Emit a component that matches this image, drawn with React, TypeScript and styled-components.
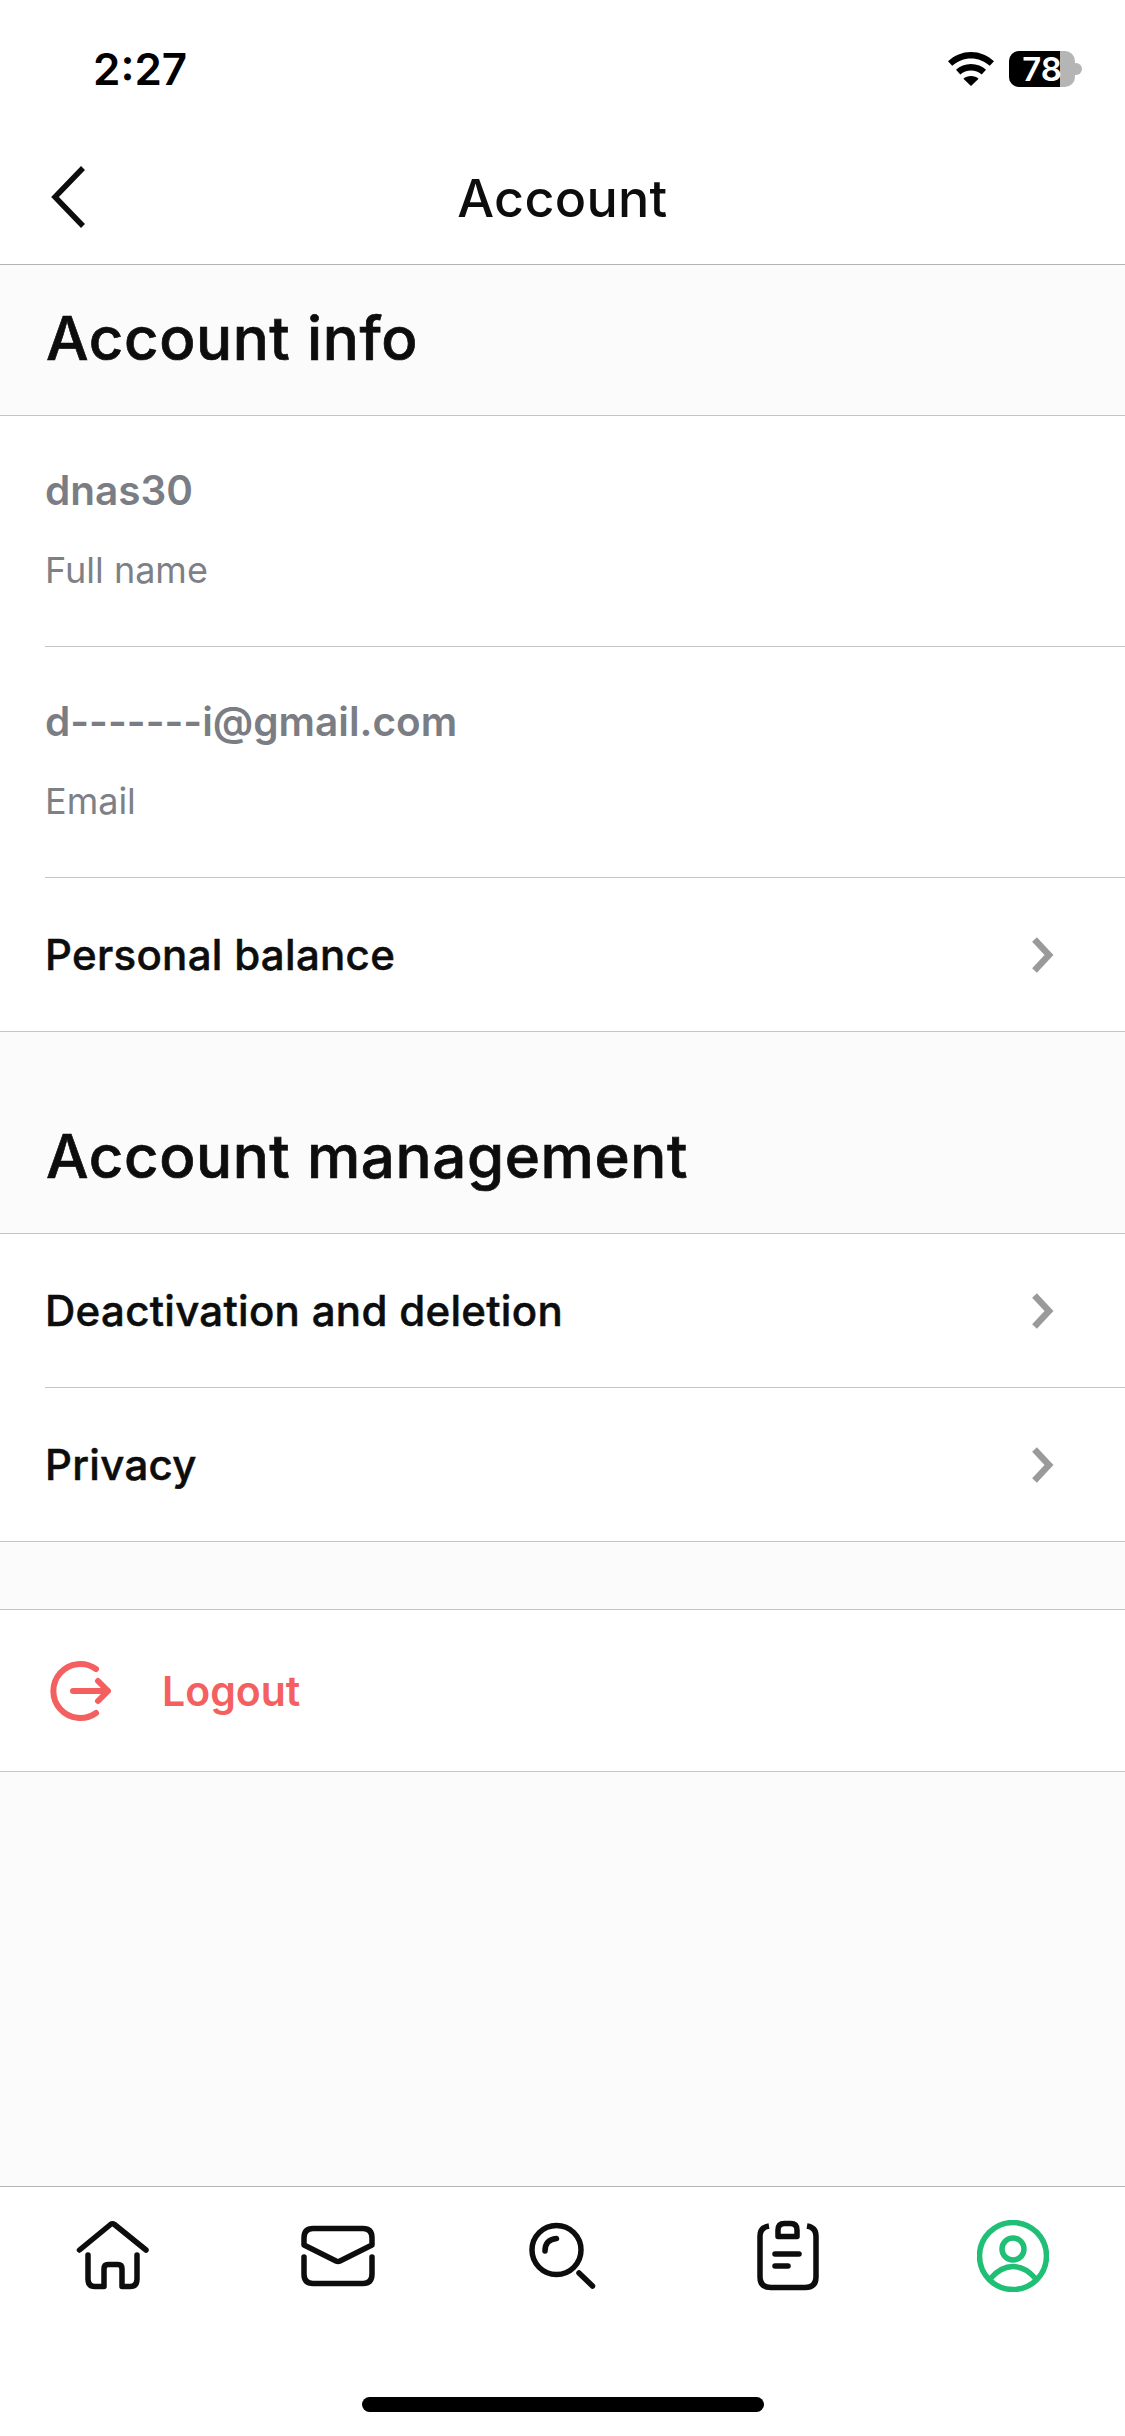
import React from "react";
import styled, { createGlobalStyle } from "styled-components";

const GlobalStyle = createGlobalStyle`
  * { box-sizing: border-box; }
  html, body { margin: 0; padding: 0; background: #fff; }
  body { font-family: "Inter", "Liberation Sans", sans-serif; color: #0d0d0d; }
`;

const Screen = styled.div`
  width: 1125px;
  height: 2436px;
  display: flex;
  flex-direction: column;
  background: #fbfbfb;
`;

const StatusBar = styled.div`
  height: 132px;
  background: #fff;
  display: flex;
  justify-content: space-between;
  align-items: flex-start;
  padding: 51px 43px 0 93px;
`;

const Clock = styled.span`
  font-size: 44px;
  line-height: 36px;
  font-weight: 600;
  color: #000;
`;

const StatusIcons = styled.div`
  display: flex;
  align-items: center;
  gap: 15px;
`;

const Battery = styled.div`
  position: relative;
  width: 66px;
  height: 36px;
  border-radius: 10px;
  background: #b5b5b5;
  display: flex;
  align-items: center;
  justify-content: center;
  font-size: 33px;
  font-weight: 600;
  color: #fff;
`;

const BatteryLevel = styled.div`
  position: absolute;
  left: 0;
  top: 0;
  bottom: 0;
  background: #000;
  border-radius: 10px 0 0 10px;
`;

const BatteryText = styled.span`
  position: relative;
  line-height: 36px;
`;

const BatteryCap = styled.div`
  width: 7px;
  height: 12px;
  margin-left: -15px;
  background: #b5b5b5;
  border-radius: 0 6px 6px 0;
`;

const NavBar = styled.div`
  height: 133px;
  background: #fff;
  border-bottom: 1px solid #b4b4b4;
  display: flex;
  align-items: center;
  justify-content: center;
  position: relative;
`;

const BackButton = styled.svg`
  position: absolute;
  left: 49px;
  top: 33px;
`;

const NavTitle = styled.h1`
  margin: 0;
  font-size: 52px;
  font-weight: 500;
  letter-spacing: 0.3px;
`;

const SectionHeader = styled.div<{ $height: number }>`
  height: ${(p) => p.$height}px;
  border-bottom: 1px solid #c4c4c4;
  display: flex;
  align-items: flex-end;
  padding: 0 46px 40px;
`;

const SectionTitle = styled.h2`
  margin: 0;
  font-size: 60px;
  line-height: 74px;
  font-weight: 500;
  letter-spacing: 0.6px;
  -webkit-text-stroke: 0.7px #0d0d0d;
`;

const List = styled.div`
  background: #fff;
  border-bottom: 1px solid #c4c4c4;
`;

const InfoRow = styled.div`
  height: 231px;
  margin-left: 45px;
  border-bottom: 1px solid #c4c4c4;
  display: flex;
  flex-direction: column;
  padding-top: 50px;
`;

const InfoValue = styled.div`
  font-size: 40.5px;
  line-height: 50px;
  font-weight: 600;
  color: #7b7d85;
`;

const InfoLabel = styled.div`
  margin-top: 32px;
  font-size: 36px;
  line-height: 44px;
  color: #7e8087;
`;

const LinkRow = styled.div<{ $last?: boolean }>`
  height: ${(p) => (p.$last ? 153 : 154)}px;
  margin-left: 45px;
  padding-right: 70px;
  border-bottom: ${(p) => (p.$last ? "none" : "1px solid #c4c4c4")};
  display: flex;
  align-items: center;
  justify-content: space-between;
`;

const LinkText = styled.span`
  font-size: 42px;
  font-weight: 500;
  letter-spacing: 0.3px;
  -webkit-text-stroke: 0.5px #0d0d0d;
  color: #0d0d0d;
`;

const Spacer = styled.div`
  height: 68px;
  border-bottom: 1px solid #c4c4c4;
`;

const LogoutRow = styled.div`
  height: 162px;
  background: #fff;
  border-bottom: 1px solid #c4c4c4;
  display: flex;
  align-items: center;
  gap: 51px;
  padding-left: 49px;
`;

const LogoutText = styled.span`
  font-size: 41px;
  font-weight: 600;
  color: #f4605f;
`;

const Filler = styled.div`
  flex: 1;
`;

const TabBar = styled.div`
  height: 250px;
  background: #fff;
  border-top: 1px solid #b4b4b4;
  display: flex;
  flex-direction: column;
  align-items: center;
`;

const Tabs = styled.div`
  width: 100%;
  height: 72px;
  margin-top: 33px;
  display: grid;
  grid-template-columns: repeat(5, 225px);
`;

const Tab = styled.div`
  display: flex;
  justify-content: center;
`;

const HomeIndicator = styled.div`
  width: 402px;
  height: 15px;
  margin-top: 105px;
  background: #000;
  border-radius: 8px;
`;

const Chevron = () => (
  <svg width="30" height="44" viewBox="0 0 30 44" fill="none">
    <path d="M9.5 6.5 L24 22 L9.5 37.5" stroke="#9a9a9a" strokeWidth="6.5" />
  </svg>
);

const WifiIcon = () => (
  <svg width="46" height="34" viewBox="0 0 46 34">
    <path
      d="M23 0C14 0 6.5 3.4 0 9.2l4.2 4.6C9.6 9 16 6.4 23 6.4s13.4 2.6 18.8 7.4L46 9.2C39.5 3.4 32 0 23 0z"
      fill="#000"
    />
    <path
      d="M23 12c-6 0-11 2.2-15 5.8l4.3 4.7c3-2.6 6.6-4.1 10.7-4.1s7.7 1.5 10.7 4.1l4.3-4.7C34 14.2 29 12 23 12z"
      fill="#000"
    />
    <path d="M23 24c-3 0-5.6 1-7.6 2.8L23 34l7.6-7.2C28.6 25 26 24 23 24z" fill="#000" />
  </svg>
);

const HomeIcon = () => (
  <svg width="76" height="72" viewBox="0 0 76 72" fill="none" stroke="#0d0d0d" strokeWidth="5.5" strokeLinecap="round" strokeLinejoin="round">
    <path d="M4.5 30 L35.5 4.5 Q37.5 3 39.5 4.5 L71 30" />
    <path d="M13 35 V59 Q13 66.5 20 66.5 H29 V49 Q29 44.5 33 44.5 H43 Q47 44.5 47 49 V66.5 H55 Q62 66.5 62 59 V35" />
  </svg>
);

const MailIcon = () => (
  <svg width="74" height="72" viewBox="0 -6 74 72" fill="none" stroke="#0d0d0d" strokeWidth="5.5" strokeLinecap="round" strokeLinejoin="round">
    <path d="M3 19 V12 Q3 2.5 12 2.5 H62 Q71 2.5 71 12 V19 L39 35 Q37 36 35 35 Z" />
    <path d="M3 31 V48 Q3 57.5 12 57.5 H62 Q71 57.5 71 48 V31" />
  </svg>
);

const SearchIcon = () => (
  <svg width="68" height="72" viewBox="0 0 68 72" fill="none" stroke="#0d0d0d" strokeWidth="5.5" strokeLinecap="round">
    <circle cx="27.5" cy="30" r="24.5" />
    <path d="M16 31 Q16 19.5 27.5 18.5" />
    <path d="M50 53 L63.5 66" />
  </svg>
);

const ClipboardIcon = () => (
  <svg width="62" height="72" viewBox="0 0 62 72" fill="none" stroke="#0d0d0d" strokeWidth="5.5" strokeLinecap="round" strokeLinejoin="round">
    <path d="M12 6 Q3 7.5 3 16 V57 Q3 67.5 14 67.5 H48 Q59 67.5 59 57 V16 Q59 7.5 50 6" strokeLinecap="butt" />
    <path d="M21 16.5 V10 Q21 3.5 27.5 3.5 H33.5 Q40 3.5 40 10 V16.5 Z" />
    <path d="M18 34 H42" />
    <path d="M18 46 H31" />
  </svg>
);

const ProfileIcon = () => (
  <svg width="72" height="72" viewBox="0 0 72 72" fill="none" stroke="#1fbf75" strokeWidth="5.5">
    <circle cx="36" cy="36" r="33.5" />
    <circle cx="36" cy="29" r="11" />
    <path d="M14 58 Q24 46.5 36 46.5 Q48 46.5 58 58" />
  </svg>
);

const LogoutIcon = () => (
  <svg width="62" height="62" viewBox="0 0 62 62" fill="none" stroke="#f4605f" strokeWidth="6" strokeLinecap="round" strokeLinejoin="round">
    <path d="M47 9 A27 27 0 1 0 47 53" />
    <path d="M24 31 H58" />
    <path d="M49 21 L59 31 L49 41" />
  </svg>
);

const App: React.FC = () => {
  return (
    <Screen>
      <GlobalStyle />
      <StatusBar>
        <Clock>2:27</Clock>
        <StatusIcons>
          <WifiIcon />
          <Battery>
            <BatteryLevel style={{ width: "77%" }} />
            <BatteryText>78</BatteryText>
          </Battery>
          <BatteryCap />
        </StatusIcons>
      </StatusBar>
      <NavBar>
        <BackButton width="40" height="64" viewBox="0 0 40 64" fill="none">
          <path d="M34 3 L6 32 L34 61" stroke="#0d0d0d" strokeWidth="5.5" />
        </BackButton>
        <NavTitle>Account</NavTitle>
      </NavBar>

      <SectionHeader $height={151}>
        <SectionTitle>Account info</SectionTitle>
      </SectionHeader>
      <List>
        <InfoRow>
          <InfoValue>dnas30</InfoValue>
          <InfoLabel>Full name</InfoLabel>
        </InfoRow>
        <InfoRow>
          <InfoValue>d-------i@gmail.com</InfoValue>
          <InfoLabel>Email</InfoLabel>
        </InfoRow>
        <LinkRow $last>
          <LinkText>Personal balance</LinkText>
          <Chevron />
        </LinkRow>
      </List>

      <SectionHeader $height={202}>
        <SectionTitle>Account management</SectionTitle>
      </SectionHeader>
      <List>
        <LinkRow>
          <LinkText>Deactivation and deletion</LinkText>
          <Chevron />
        </LinkRow>
        <LinkRow $last>
          <LinkText>Privacy</LinkText>
          <Chevron />
        </LinkRow>
      </List>

      <Spacer />
      <LogoutRow>
        <LogoutIcon />
        <LogoutText>Logout</LogoutText>
      </LogoutRow>
      <Filler />

      <TabBar>
        <Tabs>
          <Tab><HomeIcon /></Tab>
          <Tab><MailIcon /></Tab>
          <Tab><SearchIcon /></Tab>
          <Tab><ClipboardIcon /></Tab>
          <Tab><ProfileIcon /></Tab>
        </Tabs>
        <HomeIndicator />
      </TabBar>
    </Screen>
  );
};

export default App;
